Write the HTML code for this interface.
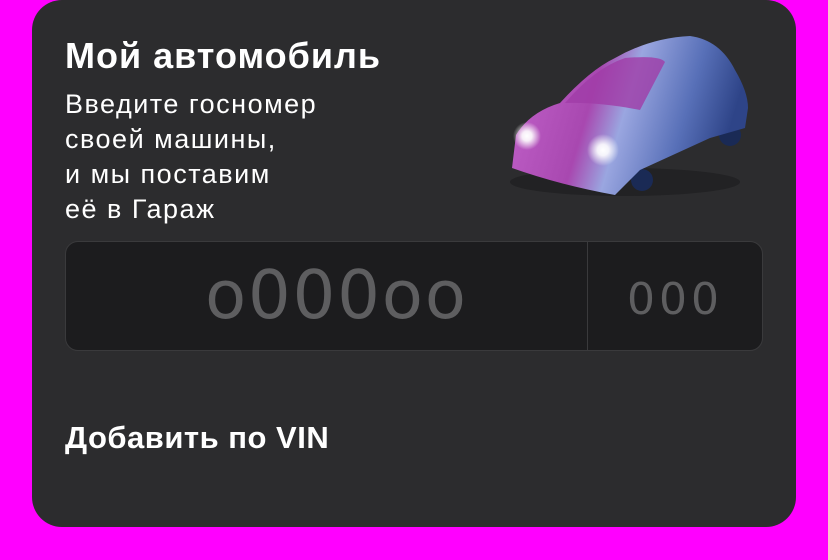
<!DOCTYPE html>
<html><head><meta charset="utf-8"><style>
body{margin:0;width:828px;height:560px;background:#ff00ff;position:relative;overflow:hidden;font-family:"Liberation Sans","DejaVu Sans",sans-serif}
.card{position:absolute;left:32px;top:0;width:764px;height:527px;background:#2c2c2e;border-radius:30px}
.t{position:absolute;left:65px;top:35px;color:#fff;font-size:36px;font-weight:bold;letter-spacing:1px}
.d{position:absolute;left:65px;top:87px;color:#fff;font-size:27px;line-height:35px;letter-spacing:1.5px}
.plate{position:absolute;left:65px;top:241px;width:696px;height:108px;background:#1c1c1e;border:1px solid #3a3a3c;border-radius:13px}
.div{position:absolute;left:521px;top:0;width:1px;height:108px;background:#3a3a3c}
.n{position:absolute;left:0;width:521px;top:14px;padding-left:20px;box-sizing:border-box;text-align:center;color:#5e5e60;font-size:67px;font-family:"DejaVu Sans",sans-serif;letter-spacing:2px}
.r{position:absolute;left:522px;width:174px;top:32px;text-align:center;color:#5e5e60;font-size:44px;font-family:"DejaVu Sans",sans-serif;letter-spacing:4px}
.v{position:absolute;left:65px;top:420px;color:#fff;font-size:31px;font-weight:bold;letter-spacing:0.5px}
</style></head><body>
<div class="card"></div>
<div class="t">Мой автомобиль</div>
<div class="d">Введите госномер<br>своей машины,<br>и мы поставим<br>её в Гараж</div>
<svg style="position:absolute;left:490px;top:0" width="300" height="220" viewBox="0 0 300 220">
<defs>
<linearGradient id="g" x1="0" y1="0" x2="1" y2="0.2"><stop offset="0.05" stop-color="#c060c8"/><stop offset="0.4" stop-color="#a848b0"/><stop offset="0.55" stop-color="#9aa6e0"/><stop offset="0.8" stop-color="#5870b8"/><stop offset="1" stop-color="#2e4488"/></linearGradient>
<radialGradient id="h"><stop offset="0" stop-color="#fff"/><stop offset="0.35" stop-color="#fff" stop-opacity="0.9"/><stop offset="1" stop-color="#fff" stop-opacity="0"/></radialGradient>
</defs>
<ellipse cx="135" cy="182" rx="115" ry="14" fill="#222224"/>
<circle cx="152" cy="180" r="11" fill="#1a2a55"/>
<circle cx="240" cy="135" r="11" fill="#1a2a55"/>
<path d="M22 168 L26 135 Q40 112 70 103 Q100 70 125 58 Q160 38 200 36 Q230 40 245 70 Q258 92 258 108 L255 128 L220 138 L150 170 L125 195 Q70 185 22 168 Z" fill="url(#g)"/>
<path d="M75 103 Q105 68 135 58 Q170 55 175 62 L150 110 Q110 102 75 103Z" fill="#a03ca8" opacity="0.8"/>
<circle cx="37" cy="136" r="14" fill="url(#h)"/>
<circle cx="113" cy="150" r="16" fill="url(#h)"/>
</svg>
<div class="plate"><div class="n">o000oo</div><div class="div"></div><div class="r">000</div></div>
<div class="v">Добавить по VIN</div>
</body></html>
